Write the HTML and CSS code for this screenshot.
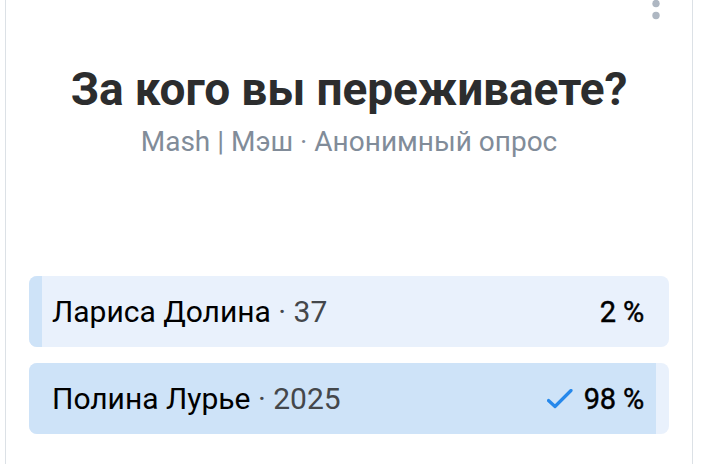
FILE: index.html
```html
<!DOCTYPE html>
<html lang="ru">
<head>
<meta charset="utf-8">
<title>Опрос</title>
<link rel="stylesheet" href="styles.css">
</head>
<body>
<div class="card">
  <div class="card-top">
    <button class="menu" aria-label="Меню">
      <svg width="8" height="32" viewBox="0 0 8 32"><circle cx="4" cy="3.5" r="3.7"/><circle cx="4" cy="15.5" r="3.7"/><circle cx="4" cy="27.5" r="3.7"/></svg>
    </button>
  </div>
  <div class="poll-head">
    <h1 class="title">За кого вы переживаете?</h1>
    <p class="sub">Mash | Мэш · Анонимный опрос</p>
  </div>
  <div class="options">
    <div class="option">
      <div class="fill" style="width: 2%"></div>
      <div class="opt-row">
        <span class="name">Лариса Долина <span class="count">· 37</span></span>
        <span class="pct">2 %</span>
      </div>
    </div>
    <div class="option">
      <div class="fill" style="width: 98%"></div>
      <div class="opt-row">
        <span class="name">Полина Лурье <span class="count">· 2025</span></span>
        <span class="right">
          <svg class="check" width="26" height="20" viewBox="0 0 26 20"><polyline points="1.5,11.5 8,17.5 24,1.5" fill="none" stroke="#2688eb" stroke-width="3.2" stroke-linecap="round" stroke-linejoin="round"/></svg>
          <span class="pct">98 %</span>
        </span>
      </div>
    </div>
  </div>
</div>
</body>
</html>
```

FILE: styles.css
```css
* { box-sizing: border-box; }
html, body { margin: 0; padding: 0; background: #fff; }
body {
  font-family: Roboto, "Noto Sans", Arial, sans-serif;
  width: 708px;
  height: 464px;
  overflow: hidden;
}
.card {
  margin: -12px 0 0 5px;
  width: 688px;
  height: 476px;
  border-left: 1px solid #dce1e6;
  border-right: 1px solid #dce1e6;
  background: #fff;
  padding: 0 23px;
}
.card-top {
  display: flex;
  justify-content: flex-end;
  height: 32px;
  padding-right: 9px;
}
.menu {
  border: 0;
  background: none;
  padding: 0;
  width: 8px;
  height: 32px;
  fill: #aeb7c2;
  display: block;
}
.menu svg { display: block; }
.poll-head {
  text-align: center;
  padding-top: 42px;
}
.title {
  margin: 0;
  font-size: 46px;
  line-height: 54px;
  font-weight: 700;
  color: #2c2d2e;
  letter-spacing: -0.1px;
}
.sub {
  margin: 9px 0 0;
  font-size: 28px;
  line-height: 34px;
  color: #818c99;
}
.options {
  margin-top: 117px;
  display: flex;
  flex-direction: column;
  gap: 16px;
}
.option {
  position: relative;
  height: 71px;
  background: #e9f1fc;
  border-radius: 8px;
  overflow: hidden;
}
.fill {
  position: absolute;
  left: 0;
  top: 0;
  bottom: 0;
  background: #cee3f8;
}
.opt-row {
  position: relative;
  height: 100%;
  display: flex;
  align-items: center;
  justify-content: space-between;
  padding: 0 25px 0 23px;
}
.name {
  font-size: 30px;
  color: #000;
}
.count { color: #44474b; }
.right {
  display: flex;
  align-items: center;
  gap: 11px;
}
.check { display: block; }
.pct {
  font-size: 29px;
  font-weight: 400;
  -webkit-text-stroke: 0.45px #000;
  letter-spacing: -0.2px;
  color: #000;
}
```
